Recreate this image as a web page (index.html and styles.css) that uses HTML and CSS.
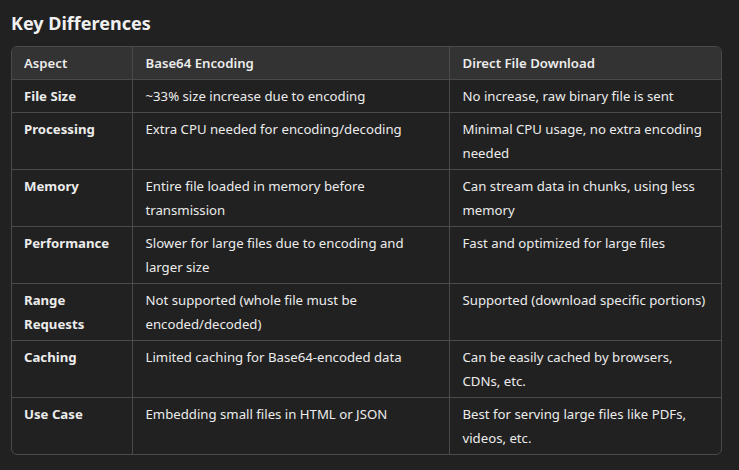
FILE: index.html
```html
<!DOCTYPE html>
<html>
<head>
<meta charset="utf-8">
<link rel="stylesheet" href="styles.css">
</head>
<body>
<h2 class="title">Key Differences</h2>
<div class="wrap">
<table class="cmp">
<colgroup><col class="c1"><col class="c2"><col class="c3"></colgroup>
<thead>
<tr><th>Aspect</th><th>Base64 Encoding</th><th>Direct File Download</th></tr>
</thead>
<tbody>
<tr><td class="k">File Size</td><td>~33% size increase due to encoding</td><td>No increase, raw binary file is sent</td></tr>
<tr><td class="k">Processing</td><td>Extra CPU needed for encoding/decoding</td><td>Minimal CPU usage, no extra encoding<br>needed</td></tr>
<tr><td class="k">Memory</td><td>Entire file loaded in memory before<br>transmission</td><td>Can stream data in chunks, using less<br>memory</td></tr>
<tr><td class="k">Performance</td><td>Slower for large files due to encoding and<br>larger size</td><td>Fast and optimized for large files</td></tr>
<tr><td class="k">Range<br>Requests</td><td>Not supported (whole file must be<br>encoded/decoded)</td><td>Supported (download specific portions)</td></tr>
<tr><td class="k">Caching</td><td>Limited caching for Base64-encoded data</td><td>Can be easily cached by browsers,<br>CDNs, etc.</td></tr>
<tr><td class="k">Use Case</td><td>Embedding small files in HTML or JSON</td><td>Best for serving large files like PDFs,<br>videos, etc.</td></tr>
</tbody>
</table>
</div>
</body>
</html>
```

FILE: styles.css
```css
html, body {
  margin: 0;
  padding: 0;
  background: #212121;
}
body {
  padding: 0 17px 0 11px;
  color: #ececec;
  font-family: "Noto Sans", "Open Sans", sans-serif;
  font-size: 13.2px;
}
.title {
  margin: 0;
  padding-top: 9px;
  height: 46px;
  box-sizing: border-box;
  font-size: 18px;
  line-height: 28px;
  font-weight: 700;
  color: #f0f0f0;
}
.wrap {
  border: 1px solid #4a4a4a;
  border-radius: 6px;
  overflow: hidden;
  width: 711px;
  box-sizing: border-box;
}
.cmp {
  width: 100%;
  border-collapse: collapse;
  table-layout: fixed;
}
.c1 { width: 120px; }
.c2 { width: 317px; }
.c3 { width: auto; }
.cmp th, .cmp td {
  text-align: left;
  vertical-align: top;
  white-space: nowrap;
  padding: 4px 12px 4px 13px;
  line-height: 24px;
  border-bottom: 1px solid #4a4a4a;
  border-left: 1px solid #4a4a4a;
}
.cmp th:first-child, .cmp td:first-child { border-left: none; padding-left: 12px; }
.cmp tbody tr:last-child td { border-bottom: none; }
.cmp th {
  background: #333333;
  font-weight: 600;
}
.cmp td.k { font-weight: 700; }
```
